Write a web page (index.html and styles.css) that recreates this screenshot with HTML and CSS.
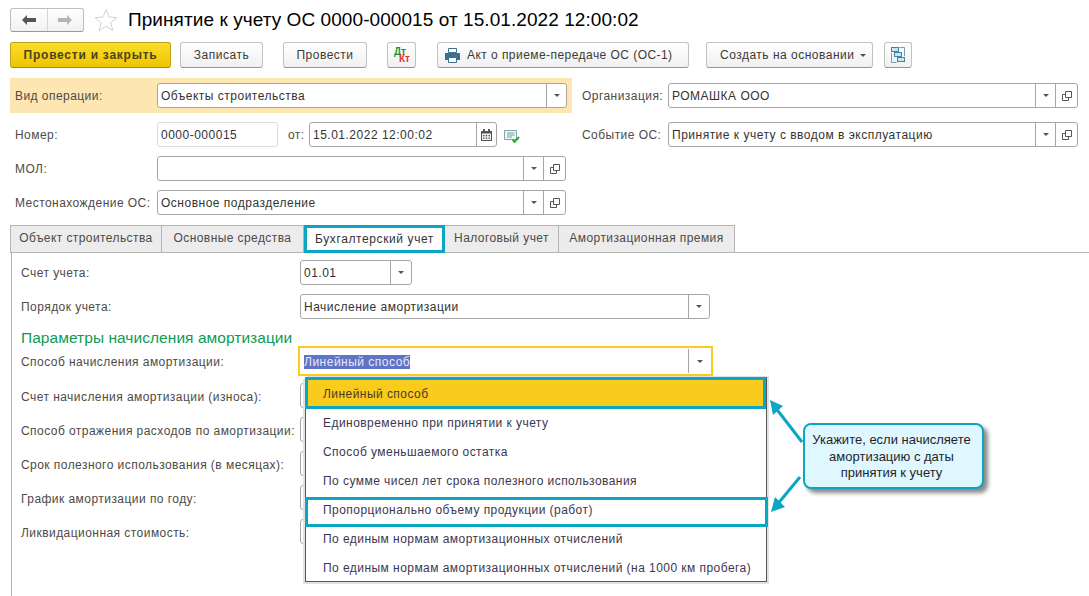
FILE: index.html
```html
<!DOCTYPE html>
<html lang="ru">
<head>
<meta charset="utf-8">
<title>Принятие к учету ОС</title>
<link rel="stylesheet" href="styles.css">
</head>
<body>
<div class="page">
  <header class="head">
    <div class="nav">
      <span class="nav-btn"><svg width="16" height="12" viewBox="0 0 16 12"><path d="M1 6l5-5v3h9v4H6v3z" fill="#555"/></svg></span>
      <span class="nav-btn"><svg width="16" height="12" viewBox="0 0 16 12"><path d="M15 6l-5-5v3H1v4h9v3z" fill="#b5b5b5"/></svg></span>
    </div>
    <svg class="star" width="24" height="24" viewBox="0 0 24 24"><path d="M12 1.500l3 7.600 8 .5-6.200 5.100 2 7.800-6.800-4.300-6.800 4.300 2-7.800L1 9.600l8-.5z" fill="#fff" stroke="#d2d2d2"/></svg>
    <h1 class="title">Принятие к учету ОС 0000-000015 от 15.01.2022 12:00:02</h1>
  </header>

  <div class="toolbar">
    <button class="btn primary">Провести и закрыть</button>
    <button class="btn w83">Записать</button>
    <button class="btn w84">Провести</button>
    <button class="btn dtkt"><span class="dt">Дт</span><span class="kt">Кт</span></button>
    <button class="btn act">
      <svg width="15" height="15" viewBox="0 0 15 15"><path d="M3.500.500h8v4h-8z" fill="#fff" stroke="#3f6f8c"/><path d="M0 5h15v7h-3v-2H3v2H0z" fill="#3f6f8c"/><path d="M3.500 9.500h8v5h-8z" fill="#fff" stroke="#3f6f8c"/></svg>
      Акт о приеме-передаче ОС (ОС-1)
    </button>
    <button class="btn create">Создать на основании <span class="caret small"></span></button>
    <button class="btn struct">
      <svg width="16" height="16" viewBox="0 0 16 16" fill="none"><path d="M1.500 6v9.500h5M14.500 9V.5h-5" stroke="#6f9fba"/><rect x="1.500" y=".5" width="7" height="4" fill="#cfe3ee" stroke="#3f85a8"/><rect x="4.500" y="5.500" width="7" height="4" fill="#cfe3ee" stroke="#3f85a8"/><rect x="7.500" y="10.500" width="7" height="4" fill="#cfe3ee" stroke="#3f85a8"/></svg>
    </button>
  </div>

  <section class="form-top">
    <div class="col-left">
      <div class="row band">
        <label class="lbl">Вид операции:</label>
        <div class="field f-op"><span class="val">Объекты строительства</span><span class="cell"><span class="caret"></span></span></div>
      </div>
      <div class="row r-num">
        <label class="lbl">Номер:</label>
        <div class="field f-num readonly"><span class="val">0000-000015</span></div>
        <label class="lbl lbl-ot">от:</label>
        <div class="field f-date"><span class="val">15.01.2022 12:00:02</span>
          <span class="cell"><svg width="11" height="12" viewBox="0 0 11 12"><path d="M0 2h11v10H0z" fill="#555"/><path d="M1 4.500h9V11H1z" fill="#eee"/><path d="M2 0h2v3H2zM7 0h2v3H7z" fill="#555"/><path d="M2 6h1.500v1.200H2zM4.700 6h1.500v1.200H4.700zM7.500 6H9v1.200H7.500zM2 8.500h1.500v1.200H2zM4.700 8.500h1.500v1.200H4.700zM7.500 8.500H9v1.200H7.500z" fill="#555"/></svg></span>
        </div>
        <svg class="doc-ok" width="16" height="13" viewBox="0 0 16 13"><path d="M.5.500h12v9H.5z" fill="#eef5f4" stroke="#7fa8a8"/><path d="M3 3h7.500M3 5h7.500M3 7h5" stroke="#7aa3a3"/><path d="M8.500 9.500l2 2.500 4.500-5" fill="none" stroke="#2fa83a" stroke-width="2"/></svg>
      </div>
      <div class="row r-mol">
        <label class="lbl">МОЛ:</label>
        <div class="field f-wide"><span class="val"></span><span class="cell"><span class="caret"></span></span><span class="cell cell-open"><svg width="10" height="10" viewBox="0 0 10 10" fill="none"><path d="M3.500.500h6v6h-6zM3.500 3.500h-3v6h6v-3" stroke="#555"/></svg></span></div>
      </div>
      <div class="row r-loc">
        <label class="lbl">Местонахождение ОС:</label>
        <div class="field f-wide"><span class="val">Основное подразделение</span><span class="cell"><span class="caret"></span></span><span class="cell cell-open"><svg width="10" height="10" viewBox="0 0 10 10" fill="none"><path d="M3.500.500h6v6h-6zM3.500 3.500h-3v6h6v-3" stroke="#555"/></svg></span></div>
      </div>
    </div>
    <div class="col-right">
      <div class="row r-org">
        <label class="lbl lbl-r">Организация:</label>
        <div class="field f-r"><span class="val">РОМАШКА ООО</span><span class="cell"><span class="caret"></span></span><span class="cell cell-open"><svg width="10" height="10" viewBox="0 0 10 10" fill="none"><path d="M3.500.500h6v6h-6zM3.500 3.500h-3v6h6v-3" stroke="#555"/></svg></span></div>
      </div>
      <div class="row r-evt">
        <label class="lbl lbl-r">Событие ОС:</label>
        <div class="field f-r"><span class="val">Принятие к учету с вводом в эксплуатацию</span><span class="cell"><span class="caret"></span></span><span class="cell cell-open"><svg width="10" height="10" viewBox="0 0 10 10" fill="none"><path d="M3.500.500h6v6h-6zM3.500 3.500h-3v6h6v-3" stroke="#555"/></svg></span></div>
      </div>
    </div>
  </section>

  <nav class="tabs">
    <span class="tab t1">Объект строительства</span>
    <span class="tab t2">Основные средства</span>
    <span class="tab t3 active">Бухгалтерский учет</span>
    <span class="tab t4">Налоговый учет</span>
    <span class="tab t5">Амортизационная премия</span>
  </nav>

  <section class="panel">
    <div class="prow">
      <label class="lbl">Счет учета:</label>
      <div class="field f-acc"><span class="val">01.01</span><span class="cell"><span class="caret"></span></span></div>
    </div>
    <div class="prow">
      <label class="lbl">Порядок учета:</label>
      <div class="field f-ord"><span class="val">Начисление амортизации</span><span class="cell"><span class="caret"></span></span></div>
    </div>
    <h2 class="group">Параметры начисления амортизации</h2>
    <div class="prow focus-row">
      <label class="lbl">Способ начисления амортизации:</label>
      <div class="field f-focus"><span class="val"><span class="sel">Линейный способ</span></span><span class="cell"><span class="caret"></span></span></div>
    </div>
    <div class="prow"><label class="lbl">Счет начисления амортизации (износа):</label><div class="field f-ord"></div></div>
    <div class="prow"><label class="lbl">Способ отражения расходов по амортизации:</label><div class="field f-ord"></div></div>
    <div class="prow"><label class="lbl">Срок полезного использования (в месяцах):</label><div class="field f-ord"></div></div>
    <div class="prow"><label class="lbl">График амортизации по году:</label><div class="field f-ord"></div></div>
    <div class="prow"><label class="lbl">Ликвидационная стоимость:</label><div class="field f-ord"></div></div>
  </section>

  <ul class="menu">
    <li class="item current">Линейный способ</li>
    <li class="item">Единовременно при принятии к учету</li>
    <li class="item">Способ уменьшаемого остатка</li>
    <li class="item">По сумме чисел лет срока полезного использования</li>
    <li class="item marked">Пропорционально объему продукции (работ)</li>
    <li class="item">По единым нормам амортизационных отчислений</li>
    <li class="item">По единым нормам амортизационных отчислений (на 1000 км пробега)</li>
  </ul>

  <svg class="arrows" width="40" height="140" viewBox="0 0 40 140" fill="none">
    <path d="M34 66L7 31" stroke="#0aa6c4" stroke-width="3"/>
    <path d="M2 24l13 6-10 9z" fill="#0aa6c4"/>
    <path d="M32 101L8 130" stroke="#0aa6c4" stroke-width="3"/>
    <path d="M3 136l14-5-10-10z" fill="#0aa6c4"/>
  </svg>

  <aside class="callout">Укажите, если начисляете амортизацию с даты принятия к учету</aside>
</div>
</body>
</html>
```

FILE: styles.css
```css
* { box-sizing: border-box; }
html, body { margin: 0; padding: 0; background: #fff; }
body { font: 12px/16px "Liberation Sans", Arial, sans-serif; color: #3d3a36; }
.page { position: relative; width: 1089px; height: 596px; overflow: hidden; }

.head { display: flex; align-items: center; height: 24px; margin: 8px 0 0 10px; }
.nav { display: flex; width: 74px; height: 24px; border: 1px solid #bdbdbd; border-bottom-color: #999; border-radius: 3px; background: linear-gradient(#fff, #f1f1f1); }
.nav-btn { flex: 1; display: flex; align-items: center; justify-content: center; }
.nav-btn + .nav-btn { border-left: 1px solid #d5d5d5; }
.star { margin-left: 10px; }
.title { margin: 0 0 0 10px; font-size: 19px; font-weight: 400; line-height: 24px; letter-spacing: .07px; color: #000; white-space: nowrap; }

.toolbar { display: flex; height: 26px; margin: 10px 0 0 10px; }
.btn { display: flex; align-items: center; justify-content: center; height: 26px; padding: 0; border: 1px solid #c2c2c2; border-bottom-color: #969696; border-radius: 3px; background: linear-gradient(#fff, #f0f0f0); font: inherit; letter-spacing: .5px; color: #3d3a36; }
.primary { width: 161px; font-weight: 700; letter-spacing: .75px; color: #4c4418; background: linear-gradient(#f9de2c, #efc500); border-color: #bfa21a; border-bottom-color: #9f8a14; }
.w83 { width: 83px; margin-left: 9px; }
.w84 { width: 84px; margin-left: 20px; }
.dtkt { position: relative; width: 29px; margin-left: 20px; }
.dt, .kt { position: absolute; font-size: 10px; font-weight: 700; line-height: 7px; letter-spacing: 0; }
.dt { left: 6px; top: 5px; color: #0a9a3c; }
.kt { left: 11px; top: 12px; color: #e8353a; }
.act { width: 252px; margin-left: 21px; gap: 7px; justify-content: flex-start; padding-left: 7px; letter-spacing: .45px; }
.create { width: 167px; margin-left: 17px; gap: 5px; justify-content: flex-start; padding-left: 13px; }
.struct { width: 28px; margin-left: 11px; }

.form-top { display: flex; margin-top: 10px; }
.col-left { width: 572px; }
.col-right { margin-left: 10px; }
.row { display: flex; align-items: center; height: 25px; }
.lbl { flex: none; letter-spacing: .45px; color: #4d4a47; white-space: nowrap; }
.col-left .lbl:first-child { width: 147px; }
.band { height: 35px; width: 562px; margin-left: 10px; padding-left: 5px; background: #fde6b2; }
.band .lbl:first-child { width: 142px; }
.row.r-num, .row.r-mol, .row.r-loc { padding-left: 15px; margin-left: 0; }
.col-left .row:not(.band) .lbl:first-child { width: 142px; }
.r-num { margin-top: 9px; }
.r-mol { margin-top: 9px; }
.r-loc { margin-top: 9px; }
.r-org { margin-top: 5px; }
.r-evt { margin-top: 14px; }
.lbl-r { width: 86px; }
.lbl-ot { margin-left: 10px; width: 21px; }
.doc-ok { margin: 3px 0 0 7px; }

.field { display: flex; flex: none; height: 25px; background: #fff; border: 1px solid #a6a6a6; border-radius: 3px; letter-spacing: .5px; color: #333; }
.val { flex: 1; min-width: 0; padding-left: 3px; line-height: 24px; white-space: nowrap; overflow: hidden; }
.cell { flex: none; display: flex; align-items: center; justify-content: center; width: 20px; border-left: 1px solid #a6a6a6; }
.cell-open { width: 22px; }
.caret { display: inline-block; width: 0; height: 0; border: 3px solid transparent; border-top: 3px solid #555; border-bottom: 0; }
.f-op { width: 410px; }
.f-num { width: 121px; }
.f-num.readonly { border-color: #dcdcdc; }
.f-date { width: 188px; }
.f-wide { width: 409px; }
.f-r { width: 410px; }
.f-acc { width: 112px; margin-left: 0; }
.f-ord { width: 410px; }
.f-acc .cell, .f-ord .cell { width: 21px; }

.tabs { display: flex; height: 28px; margin: 10px 0 0 10px; border-bottom: 1px solid #b4b4b4; }
.tab { flex: none; height: 27px; padding: 0; text-align: center; line-height: 25px; letter-spacing: .42px; background: #ececec; border: 1px solid #b4b4b4; border-left: 0; border-bottom: 0; color: #4d4a47; white-space: nowrap; }
.t1 { width: 152px; border-left: 1px solid #b4b4b4; }
.t2 { width: 142px; }
.t3 { width: 141px; }
.t4 { width: 114px; }
.t5 { width: 176px; }
.tab.active { height: 28px; background: #fff; border: 3px solid #0aa6c4; color: #333; line-height: 23px; letter-spacing: .6px; }

.panel { width: 1078px; height: 350px; margin-left: 11px; padding: 7px 0 0 9px; border-left: 1px solid #b4b4b4; }
.prow { display: grid; grid-template-columns: 279px auto; align-items: center; height: 25px; margin-bottom: 9px; justify-content: start; }
.prow .lbl { width: 279px; }
.focus-row .lbl, .focus-row ~ .prow .lbl { padding-top: 2px; }
.group { margin: 1px 0 -2px; font-size: 15.500px; font-weight: 400; line-height: 20px; letter-spacing: .05px; color: #0f9a55; white-space: nowrap; }
.focus-row { height: 30px; margin-bottom: 7px; grid-template-columns: 277px auto; }
.focus-row .lbl { width: 277px; }
.f-focus { width: 415px; height: 30px; border: 2px solid #f9cb1c; border-radius: 0; }
.f-focus .val { padding-left: 4px; line-height: 28px; }
.f-focus .cell { width: 23px; margin: 1px 0; }
.sel { background: #5f73c7; color: #e6e9f7; }

.menu { position: absolute; left: 305px; top: 377px; width: 462px; height: 205px; margin: 0; padding: 0; list-style: none; background: #fff; border: 1px solid #555; box-shadow: -2px 2px 0 #e2e2e2, 2px -1px 0 #e2e2e2, 2px 2px 0 #e2e2e2; }
.item { height: 29px; padding-left: 17px; line-height: 31px; letter-spacing: .45px; color: #3d3650; white-space: nowrap; }
.item.current { margin: -1px 0 -1px -1px; height: 32px; background: #f9cb1c; border: 3px solid #0aa6c4; padding-left: 15px; line-height: 28px; color: #4a3a2a; }
.item.marked { margin: 2px -2px -3px -1px; height: 30px; border: 3px solid #0aa6c4; padding-left: 15px; line-height: 20px; }

.arrows { position: absolute; left: 768px; top: 376px; }
.callout { position: absolute; left: 803px; top: 423px; width: 181px; height: 66px; padding: 7px 10px 0 6px; background: #dff7ff; border: 2px solid #0aa6c4; border-radius: 8px; box-shadow: 4px 4px 4px #8a8a8a; font-size: 13px; line-height: 16.500px; text-align: center; color: #1f1f2a; }
```
